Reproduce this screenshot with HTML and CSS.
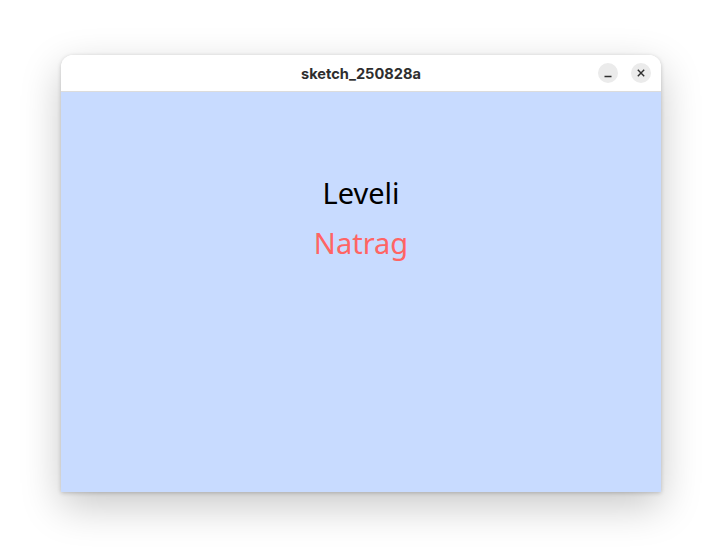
FILE: index.html
```html
<!DOCTYPE html>
<html>
<head>
<meta charset="utf-8">
<link rel="stylesheet" href="styles.css">
</head>
<body>
<div class="window">
  <div class="titlebar">
    <span class="title">sketch_250828a</span>
    <div class="controls">
      <span class="btn">
        <svg width="20" height="20" viewBox="0 0 20 20"><path d="M6.5 13.5h7" stroke="#2e2e2e" stroke-width="1.3"/></svg>
      </span>
      <span class="btn">
        <svg width="20" height="20" viewBox="0 0 20 20"><path d="M6.8 6.8l6.4 6.4M13.2 6.8l-6.4 6.4" stroke="#2e2e2e" stroke-width="1.4"/></svg>
      </span>
    </div>
  </div>
  <div class="canvas">
    <div class="item item-main">Leveli</div>
    <div class="item item-back">Natrag</div>
  </div>
</div>
</body>
</html>
```
FILE: styles.css
```css
html, body {
  margin: 0;
  padding: 0;
  background: #ffffff;
}
body {
  width: 722px;
  height: 559px;
  overflow: hidden;
  padding-top: 55px;
  box-sizing: border-box;
}
.window {
  width: 600px;
  margin: 0 auto;
  border-radius: 12px 12px 0 0;
  background: #ffffff;
  box-shadow: 0 14px 40px rgba(0, 0, 0, 0.22), 0 1px 4px rgba(0, 0, 0, 0.2);
  overflow: hidden;
}
.titlebar {
  position: relative;
  height: 36px;
  border-bottom: 1px solid #dcdcdc;
  display: flex;
  align-items: center;
  justify-content: center;
  background: #ffffff;
}
.title {
  font-family: "Inter", "Noto Sans", sans-serif;
  font-weight: 700;
  font-size: 14.6px;
  color: #2e2e2e;
  padding-top: 1px;
}
.controls {
  position: absolute;
  right: 10px;
  top: 8px;
  display: flex;
  gap: 13px;
}
.btn {
  width: 20px;
  height: 20px;
  border-radius: 50%;
  background: #ebebeb;
  display: block;
}
.btn svg {
  display: block;
}
.canvas {
  height: 400px;
  background: #c8dbff;
  padding-top: 76px;
  box-sizing: border-box;
  text-align: center;
  font-family: "Noto Sans", sans-serif;
  font-size: 29px;
}
.item {
  height: 50px;
  line-height: 50px;
}
.item-main {
  color: #000000;
}
.item-back {
  color: #ff6464;
}
```
